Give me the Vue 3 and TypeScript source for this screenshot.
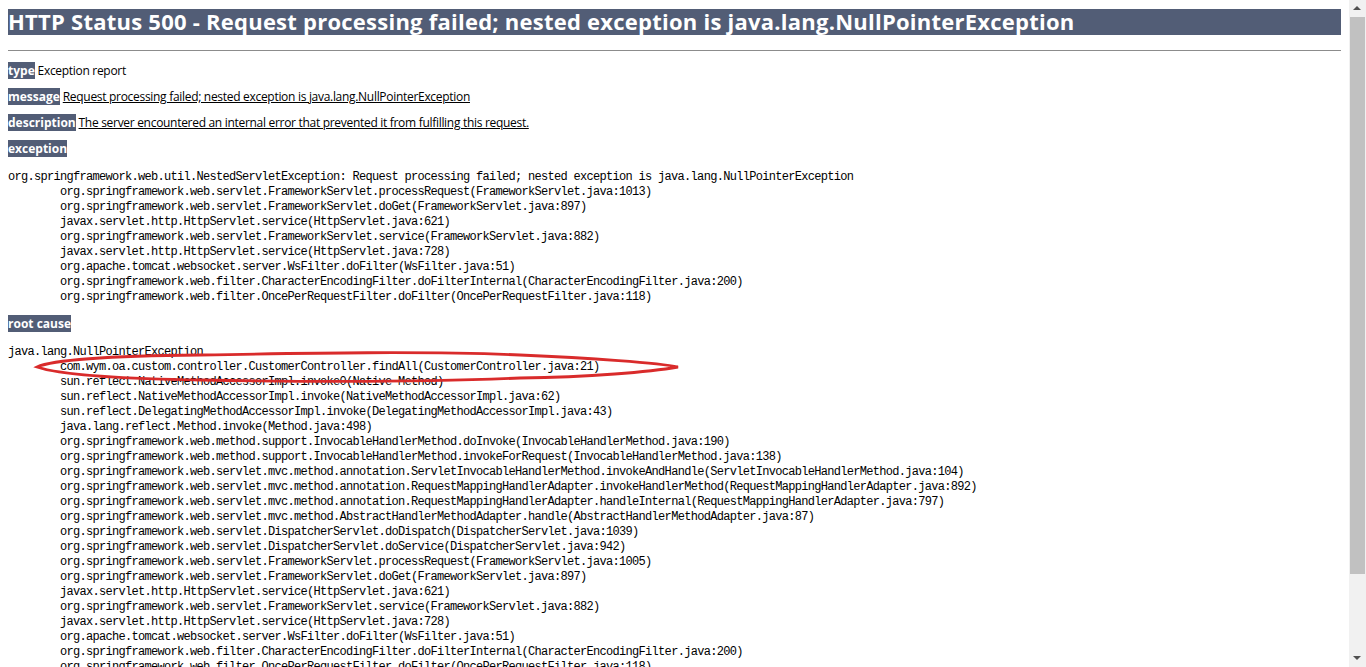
<script setup lang="ts">
const exceptionTrace = [
  'org.springframework.web.util.NestedServletException: Request processing failed; nested exception is java.lang.NullPointerException',
  '\torg.springframework.web.servlet.FrameworkServlet.processRequest(FrameworkServlet.java:1013)',
  '\torg.springframework.web.servlet.FrameworkServlet.doGet(FrameworkServlet.java:897)',
  '\tjavax.servlet.http.HttpServlet.service(HttpServlet.java:621)',
  '\torg.springframework.web.servlet.FrameworkServlet.service(FrameworkServlet.java:882)',
  '\tjavax.servlet.http.HttpServlet.service(HttpServlet.java:728)',
  '\torg.apache.tomcat.websocket.server.WsFilter.doFilter(WsFilter.java:51)',
  '\torg.springframework.web.filter.CharacterEncodingFilter.doFilterInternal(CharacterEncodingFilter.java:200)',
  '\torg.springframework.web.filter.OncePerRequestFilter.doFilter(OncePerRequestFilter.java:118)',
].join('\n')

const rootTrace = [
  'java.lang.NullPointerException',
  '\tcom.wym.oa.custom.controller.CustomerController.findAll(CustomerController.java:21)',
  '\tsun.reflect.NativeMethodAccessorImpl.invoke0(Native Method)',
  '\tsun.reflect.NativeMethodAccessorImpl.invoke(NativeMethodAccessorImpl.java:62)',
  '\tsun.reflect.DelegatingMethodAccessorImpl.invoke(DelegatingMethodAccessorImpl.java:43)',
  '\tjava.lang.reflect.Method.invoke(Method.java:498)',
  '\torg.springframework.web.method.support.InvocableHandlerMethod.doInvoke(InvocableHandlerMethod.java:190)',
  '\torg.springframework.web.method.support.InvocableHandlerMethod.invokeForRequest(InvocableHandlerMethod.java:138)',
  '\torg.springframework.web.servlet.mvc.method.annotation.ServletInvocableHandlerMethod.invokeAndHandle(ServletInvocableHandlerMethod.java:104)',
  '\torg.springframework.web.servlet.mvc.method.annotation.RequestMappingHandlerAdapter.invokeHandlerMethod(RequestMappingHandlerAdapter.java:892)',
  '\torg.springframework.web.servlet.mvc.method.annotation.RequestMappingHandlerAdapter.handleInternal(RequestMappingHandlerAdapter.java:797)',
  '\torg.springframework.web.servlet.mvc.method.AbstractHandlerMethodAdapter.handle(AbstractHandlerMethodAdapter.java:87)',
  '\torg.springframework.web.servlet.DispatcherServlet.doDispatch(DispatcherServlet.java:1039)',
  '\torg.springframework.web.servlet.DispatcherServlet.doService(DispatcherServlet.java:942)',
  '\torg.springframework.web.servlet.FrameworkServlet.processRequest(FrameworkServlet.java:1005)',
  '\torg.springframework.web.servlet.FrameworkServlet.doGet(FrameworkServlet.java:897)',
  '\tjavax.servlet.http.HttpServlet.service(HttpServlet.java:621)',
  '\torg.springframework.web.servlet.FrameworkServlet.service(FrameworkServlet.java:882)',
  '\tjavax.servlet.http.HttpServlet.service(HttpServlet.java:728)',
  '\torg.apache.tomcat.websocket.server.WsFilter.doFilter(WsFilter.java:51)',
  '\torg.springframework.web.filter.CharacterEncodingFilter.doFilterInternal(CharacterEncodingFilter.java:200)',
  '\torg.springframework.web.filter.OncePerRequestFilter.doFilter(OncePerRequestFilter.java:118)',
].join('\n')
</script>

<template>
  <div class="window">
    <main class="page">
      <h1>HTTP Status 500 - Request processing failed; nested exception is java.lang.NullPointerException</h1>
      <div class="line"></div>
      <p><b>type</b> Exception report</p>
      <p><b>message</b> <u>Request processing failed; nested exception is java.lang.NullPointerException</u></p>
      <p><b>description</b> <u>The server encountered an internal error that prevented it from fulfilling this request.</u></p>
      <p><b>exception</b></p>
      <pre>{{ exceptionTrace }}</pre>
      <p><b>root cause</b></p>
      <pre>{{ rootTrace }}</pre>
      <svg class="mark" width="660" height="45" viewBox="0 0 660 45">
        <path d="M7 22C20 16 70 11 170 10C280 8 400 6 490 10C560 13 630 18 648 22C620 27 560 32 490 33C400 37 280 37 170 35C100 34 30 30 7 22Z" fill="none" stroke="#d92b2b" stroke-width="2.8" />
      </svg>
    </main>
    <aside class="scrollbar">
      <span class="arrow up"></span>
      <span class="thumb"></span>
      <span class="arrow down"></span>
    </aside>
  </div>
</template>

<style>
html, body { margin: 0; overflow: hidden; background: #fff; }
</style>

<style scoped>
.window {
  display: flex;
  height: 667px;
  overflow: hidden;
  background: #fff;
}
.page {
  position: relative;
  flex: 1;
  min-width: 0;
  padding: 9px 8px 0;
  overflow: hidden;
  font-family: "Open Sans", "Noto Sans", sans-serif;
  color: #000;
}
h1 {
  margin: 0;
  height: 26px;
  font-size: 22px;
  line-height: 25px;
  font-weight: 700;
  letter-spacing: 0.24px;
  color: #fff;
  background: #525d76;
  white-space: nowrap;
}
.line {
  height: 1px;
  margin-top: 15px;
  background: #8c8c8c;
}
p {
  margin: 10px 0 0;
  height: 16px;
  font-size: 12px;
  line-height: 16px;
  letter-spacing: -0.3px;
  white-space: nowrap;
}
.line + p { margin-top: 12px; }
b {
  font-weight: 700;
  letter-spacing: 0;
  color: #fff;
  background: #525d76;
}
pre {
  margin: 13px 0 11px;
  font-family: "Liberation Mono", monospace;
  font-size: 12px;
  line-height: 15px;
  letter-spacing: -0.7px;
  tab-size: 8;
  color: #000;
}
.mark {
  position: absolute;
  left: 30px;
  top: 345px;
}
.scrollbar {
  display: flex;
  flex-direction: column;
  align-items: center;
  width: 17px;
  background: #f1f1f1;
}
.arrow {
  flex: none;
  width: 17px;
  height: 17px;
  position: relative;
}
.arrow::after {
  content: "";
  position: absolute;
  left: 4px;
  border-left: 4px solid transparent;
  border-right: 4px solid transparent;
}
.up::after { top: 6px; border-bottom: 4px solid #505050; }
.down::after { top: 6px; border-top: 4px solid #505050; }
.thumb {
  width: 15px;
  height: 557px;
  background: #c1c1c1;
}
.down { margin-top: auto; }
</style>
